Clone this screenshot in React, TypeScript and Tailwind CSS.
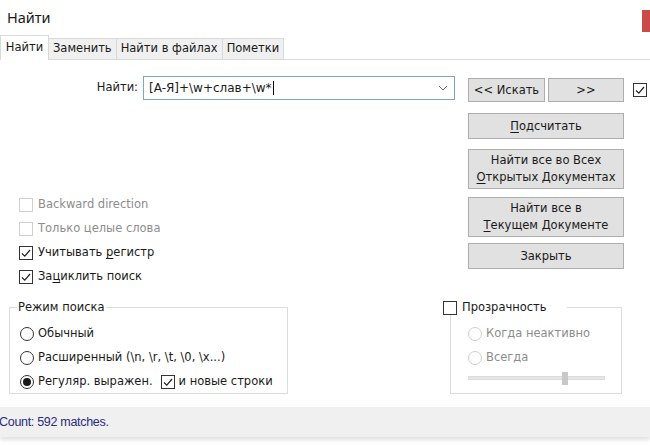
import React from 'react'

const font = { fontFamily: '"DejaVu Sans", Verdana, sans-serif' }

const CheckBox = ({ checked, disabled }: { checked?: boolean; disabled?: boolean }) => (
  <span
    className={`flex h-[14px] w-[14px] shrink-0 items-center justify-center border bg-white ${
      disabled ? 'border-[#cfcfcf]' : 'border-[#333333]'
    }`}
  >
    {checked && (
      <svg width="12" height="12" viewBox="0 0 12 12">
        <polyline points="2,6.5 4.8,9.2 10,3" fill="none" stroke="#222" strokeWidth="1.2" />
      </svg>
    )}
  </span>
)

const Radio = ({ checked, disabled }: { checked?: boolean; disabled?: boolean }) => (
  <span
    className={`flex h-[14px] w-[14px] shrink-0 items-center justify-center rounded-full border bg-white ${
      disabled ? 'border-[#cfcfcf]' : 'border-[#333333]'
    }`}
  >
    {checked && <span className="h-[8px] w-[8px] rounded-full bg-[#1a1a1a]" />}
  </span>
)

const Btn = ({ className, children }: { className: string; children: React.ReactNode }) => (
  <div
    className={`flex flex-col items-center justify-center border border-[#adadad] bg-[#e1e1e1] text-center leading-[17px] text-[#1a1a1a] ${className}`}
  >
    {children}
  </div>
)

const tabs = ['Заменить', 'Найти в файлах', 'Пометки']

export default function App() {
  return (
    <div className="h-[446px] w-[650px] overflow-hidden bg-white text-[11.5px] text-[#1a1a1a]" style={font}>
      {/* title bar */}
      <div className="flex h-[35px] items-start justify-between">
        <span className="pl-[7px] pt-[7px] text-[14.5px]" style={{ fontFamily: '"Noto Sans", sans-serif' }}>
          Найти
        </span>
        <span className="mt-[10px] h-[22px] w-[8px] bg-[#c94a46]" />
      </div>

      {/* tabs */}
      <div className="flex h-[25px] items-end border-b border-[#d9d9d9]">
        <div className="relative -mb-px flex h-[25px] w-[49px] items-center justify-center border border-b-0 border-[#d9d9d9] bg-white">
          Найти
        </div>
        {tabs.map((t) => (
          <div
            key={t}
            className="flex h-[21px] items-center border border-b-0 border-l-0 border-[#d9d9d9] bg-[#f0f0f0] px-[4px]"
          >
            {t}
          </div>
        ))}
      </div>

      {/* upper section */}
      <div className="flex pt-[16px]">
        <div className="w-[468px]">
          <div className="flex h-[24px] items-center">
            <span className="w-[138px] text-right">Найти:</span>
            <div className="ml-[5px] flex h-[24px] w-[312px] items-center border border-[#7aa6cc] bg-white pl-[5px] text-[12px]">
              <span>[A-Я]+\w+слав+\w*</span>
              <span className="ml-px h-[14px] w-px bg-black" />
              <span className="flex-1" />
              <svg width="10" height="6" viewBox="0 0 10 6" className="mr-[6px]">
                <polyline points="1,1 5,5 9,1" fill="none" stroke="#666" strokeWidth="1" />
              </svg>
            </div>
          </div>

          <div className="ml-[19px] mt-[98px] flex flex-col gap-[10px]">
            <div className="flex h-[14px] items-center gap-[5px] text-[#8c8c8c]">
              <CheckBox disabled />
              <span>Backward direction</span>
            </div>
            <div className="flex h-[14px] items-center gap-[5px] text-[#8c8c8c]">
              <CheckBox disabled />
              <span>Только целые слова</span>
            </div>
            <div className="flex h-[14px] items-center gap-[5px]">
              <CheckBox checked />
              <span>
                Учитывать <span className="underline underline-offset-2">р</span>егистр
              </span>
            </div>
            <div className="flex h-[14px] items-center gap-[5px]">
              <CheckBox checked />
              <span>
                За<span className="underline underline-offset-2">ц</span>иклить поиск
              </span>
            </div>
          </div>
        </div>

        <div className="mt-[2px] flex w-[156px] flex-col">
          <div className="flex gap-[3px]">
            <Btn className="h-[24px] w-[77px]">&lt;&lt; Искать</Btn>
            <Btn className="h-[24px] w-[76px]">&gt;&gt;</Btn>
          </div>
          <Btn className="mt-[11px] h-[26px]">
            <span>
              <span className="underline underline-offset-2">П</span>одсчитать
            </span>
          </Btn>
          <Btn className="mt-[10px] h-[40px]">
            <span>Найти все во Всех</span>
            <span>
              <span className="underline underline-offset-2">О</span>ткрытых Документах
            </span>
          </Btn>
          <Btn className="mt-[8px] h-[40px]">
            <span>Найти все в</span>
            <span>
              <span className="underline underline-offset-2">Т</span>екущем Документе
            </span>
          </Btn>
          <Btn className="mt-[6px] h-[26px]">Закрыть</Btn>
        </div>

        <div className="ml-[9px] mt-[7px]">
          <CheckBox checked />
        </div>
      </div>

      {/* lower section */}
      <div className="mt-[16px] flex">
        <fieldset className="ml-[9px] h-[94px] w-[279px] border border-[#dcdcdc] pl-[10px] pt-[12px]">
          <legend className="-ml-[3px] px-[1px] leading-[15px]">Режим поиска</legend>
          <div className="flex flex-col gap-[10px]">
            <div className="flex h-[14px] items-center gap-[4px]">
              <Radio />
              <span>Обычный</span>
            </div>
            <div className="flex h-[14px] items-center gap-[4px]">
              <Radio />
              <span>Расширенный (\n, \r, \t, \0, \x...)</span>
            </div>
            <div className="flex h-[14px] items-center gap-[4px]">
              <Radio checked />
              <span>Регуляр. выражен.</span>
              <span className="ml-[4px]">
                <CheckBox checked />
              </span>
              <span>и новые строки</span>
            </div>
          </div>
        </fieldset>

        <fieldset className="ml-[162px] h-[94px] w-[172px] border border-[#dcdcdc] pl-[17px] pt-[12px]">
          <legend className="-ml-[25px] flex items-center gap-[5px] pr-[20px] leading-[15px]">
            <CheckBox />
            <span>Прозрачность</span>
          </legend>
          <div className="flex flex-col gap-[10px] text-[#8c8c8c]">
            <div className="flex h-[14px] items-center gap-[4px]">
              <Radio disabled />
              <span>Когда неактивно</span>
            </div>
            <div className="flex h-[14px] items-center gap-[4px]">
              <Radio disabled />
              <span>Всегда</span>
            </div>
          </div>
          <div className="mt-[6px] flex h-[14px] w-[137px] items-center">
            <div className="h-[4px] w-[94px] border border-r-0 border-[#dcdcdc] bg-[#e6e6e6]" />
            <div className="h-[13px] w-[6px] bg-[#c8c8c8]" />
            <div className="h-[4px] flex-1 border border-l-0 border-[#dcdcdc] bg-[#e6e6e6]" />
          </div>
        </fieldset>
      </div>

      {/* status bar */}
      <div
        className="mt-[13px] flex h-[30px] items-center bg-[#f0f0f0] text-[12.5px] tracking-[-0.3px] text-[#2b2b80] shadow-[0_3px_4px_rgba(0,0,0,0.12)]"
        style={{ fontFamily: '"Liberation Sans", Arial, sans-serif' }}
      >
        <span className="-ml-px">Count: 592 matches.</span>
      </div>
    </div>
  )
}
